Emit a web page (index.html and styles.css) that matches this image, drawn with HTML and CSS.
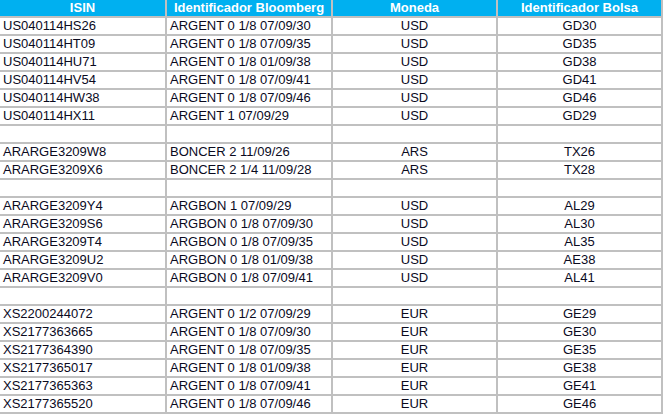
FILE: index.html
```html
<!DOCTYPE html>
<html>
<head>
<meta charset="utf-8">
<link rel="stylesheet" href="styles.css">
</head>
<body>
<table class="bonds">
<colgroup><col class="c1"><col class="c2"><col class="c3"><col class="c4"></colgroup>
<thead>
<tr><th>ISIN</th><th>Identificador Bloomberg</th><th>Moneda</th><th>Identificador Bolsa</th></tr>
</thead>
<tbody>
<tr><td>US040114HS26</td><td>ARGENT 0 1/8 07/09/30</td><td class="ctr">USD</td><td class="ctr">GD30</td></tr>
<tr><td>US040114HT09</td><td>ARGENT 0 1/8 07/09/35</td><td class="ctr">USD</td><td class="ctr">GD35</td></tr>
<tr><td>US040114HU71</td><td>ARGENT 0 1/8 01/09/38</td><td class="ctr">USD</td><td class="ctr">GD38</td></tr>
<tr><td>US040114HV54</td><td>ARGENT 0 1/8 07/09/41</td><td class="ctr">USD</td><td class="ctr">GD41</td></tr>
<tr><td>US040114HW38</td><td>ARGENT 0 1/8 07/09/46</td><td class="ctr">USD</td><td class="ctr">GD46</td></tr>
<tr><td>US040114HX11</td><td>ARGENT 1 07/09/29</td><td class="ctr">USD</td><td class="ctr">GD29</td></tr>
<tr><td></td><td></td><td></td><td></td></tr>
<tr><td>ARARGE3209W8</td><td>BONCER 2 11/09/26</td><td class="ctr">ARS</td><td class="ctr">TX26</td></tr>
<tr><td>ARARGE3209X6</td><td>BONCER 2 1/4 11/09/28</td><td class="ctr">ARS</td><td class="ctr">TX28</td></tr>
<tr><td></td><td></td><td></td><td></td></tr>
<tr><td>ARARGE3209Y4</td><td>ARGBON 1 07/09/29</td><td class="ctr">USD</td><td class="ctr">AL29</td></tr>
<tr><td>ARARGE3209S6</td><td>ARGBON 0 1/8 07/09/30</td><td class="ctr">USD</td><td class="ctr">AL30</td></tr>
<tr><td>ARARGE3209T4</td><td>ARGBON 0 1/8 07/09/35</td><td class="ctr">USD</td><td class="ctr">AL35</td></tr>
<tr><td>ARARGE3209U2</td><td>ARGBON 0 1/8 01/09/38</td><td class="ctr">USD</td><td class="ctr">AE38</td></tr>
<tr><td>ARARGE3209V0</td><td>ARGBON 0 1/8 07/09/41</td><td class="ctr">USD</td><td class="ctr">AL41</td></tr>
<tr><td></td><td></td><td></td><td></td></tr>
<tr><td>XS2200244072</td><td>ARGENT 0 1/2 07/09/29</td><td class="ctr">EUR</td><td class="ctr">GE29</td></tr>
<tr><td>XS2177363665</td><td>ARGENT 0 1/8 07/09/30</td><td class="ctr">EUR</td><td class="ctr">GE30</td></tr>
<tr><td>XS2177364390</td><td>ARGENT 0 1/8 07/09/35</td><td class="ctr">EUR</td><td class="ctr">GE35</td></tr>
<tr><td>XS2177365017</td><td>ARGENT 0 1/8 01/09/38</td><td class="ctr">EUR</td><td class="ctr">GE38</td></tr>
<tr><td>XS2177365363</td><td>ARGENT 0 1/8 07/09/41</td><td class="ctr">EUR</td><td class="ctr">GE41</td></tr>
<tr><td>XS2177365520</td><td>ARGENT 0 1/8 07/09/46</td><td class="ctr">EUR</td><td class="ctr">GE46</td></tr>
</tbody>
</table>
</body>
</html>
```

FILE: styles.css
```css
html, body {
  margin: 0;
  padding: 0;
  background: #ffffff;
}
.bonds {
  border-collapse: separate;
  border-spacing: 0;
  table-layout: fixed;
  width: 663px;
  font-family: "Liberation Sans", Arial, sans-serif;
  font-size: 13px;
  color: #0a0a1e;
}
.c1 { width: 167px; }
.c2 { width: 166px; }
.c3 { width: 165px; }
.c4 { width: 165px; }
.bonds th,
.bonds td {
  height: 16px;
  padding: 0 3px;
  line-height: 16px;
  border-right: 2px solid #c0c0c0;
  border-bottom: 2px solid #c0c0c0;
  white-space: nowrap;
  overflow: hidden;
  box-sizing: content-box;
}
.bonds th {
  background: #00b0f0;
  color: #ffffff;
  font-weight: bold;
  text-align: center;
}
.bonds td {
  text-align: left;
}
.bonds td.ctr {
  text-align: center;
}
```
